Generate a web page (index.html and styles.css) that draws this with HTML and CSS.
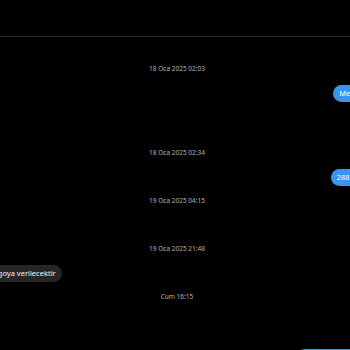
FILE: index.html
```html
<html>
	<head>
		<link rel="stylesheet" href="styles.css">
	</head>
	<body>
		<div id="header"></div>

		<div id="thread">
			<div class="stamp">18 Oca 2025 02:03</div>
			<div class="row mine gap">
				<div class="bubble">Merhaba</div>
			</div>

			<div class="stamp">18 Oca 2025 02:34</div>
			<div class="row mine">
				<div class="bubble">28890146</div>
			</div>

			<div class="stamp empty">19 Oca 2025 04:15</div>

			<div class="stamp">19 Oca 2025 21:48</div>
			<div class="row theirs">
				<div class="bubble">Kargoya verilecektir</div>
			</div>

			<div class="stamp last">Cum 16:15</div>
			<div class="row mine">
				<div class="bubble">Tamam teşekkürler</div>
			</div>
		</div>
	</body>
</html>
```

FILE: styles.css
```css
html, body {
	margin: 0;
	background: #000;
	overflow: hidden;
}

body {
	width: 350px;
	height: 350px;
	font-family: "Noto Sans", "Open Sans", sans-serif;
	color: #f5f5f5;
}

#header {
	height: 36px;
	border-bottom: 1px solid #262626;
}

#thread {
	width: 400px;
	margin-left: -23px;
	padding-top: 26px;
}

.stamp {
	text-align: center;
	font-size: 6.5px;
	line-height: 12px;
	color: #b4b4b4;
	margin-bottom: 10px;
}

.stamp.empty {
	margin-bottom: 36px;
}

.stamp.last {
	margin-bottom: 46px;
}

.row {
	display: flex;
	margin-bottom: 9px;
}

.row.gap {
	margin-bottom: 45px;
}

.mine {
	justify-content: flex-end;
}

.theirs {
	justify-content: flex-start;
	padding-left: 3px;
}

.bubble {
	font-size: 7.5px;
	line-height: 9px;
	padding: 4px 6px;
	border-radius: 9px;
	white-space: nowrap;
}

.mine .bubble {
	background: #3797f0;
	color: #fff;
}

.theirs .bubble {
	background: #262626;
}
```
